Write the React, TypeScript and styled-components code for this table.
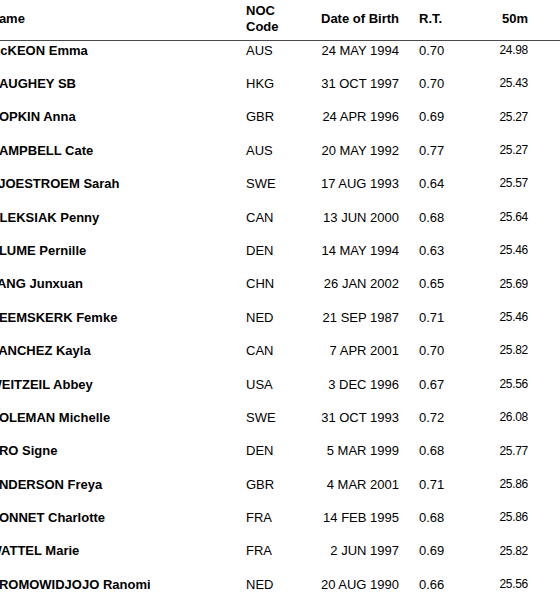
import styled, { createGlobalStyle } from 'styled-components';

const GlobalStyle = createGlobalStyle`
  html, body {
    margin: 0;
    padding: 0;
    background: #ffffff;
    overflow: hidden;
  }
  body {
    font-family: "Liberation Sans", Arial, sans-serif;
    color: #000000;
  }
`;

const Page = styled.div`
  width: 560px;
  height: 600px;
  overflow: hidden;
`;

// the sheet is cut off on the left, so the name column starts off screen
const Table = styled.div`
  margin-left: -10.5px;
  width: 570.5px;
`;

const columns = '256.5px 64px 89px 71px 58px';

const HeaderRow = styled.div`
  display: grid;
  grid-template-columns: ${columns};
  align-items: center;
  box-sizing: border-box;
  height: 41px;
  padding: 3px 0 5px;
  border-bottom: 1px solid #4a4a4a;
  font-size: 13px;
  line-height: 16px;
  font-weight: bold;
`;

const Row = styled.div`
  display: grid;
  grid-template-columns: ${columns};
  align-items: start;
  box-sizing: border-box;
  height: 33.4px;
  padding-top: 1.6px;
  font-size: 13px;
  line-height: 16px;
`;

const Cell = styled.div<{ $align?: 'left' | 'right'; $indent?: number }>`
  text-align: ${({ $align }) => $align ?? 'left'};
  padding-left: ${({ $indent }) => $indent ?? 0}px;
  white-space: nowrap;
`;

const NameCell = styled(Cell)`
  font-weight: bold;
`;

const SplitCell = styled(Cell)`
  font-size: 12px;
  letter-spacing: -0.3px;
  margin-top: -0.7px;
`;

interface Swimmer {
  name: string;
  noc: string;
  dob: string;
  rt: string;
  split: string;
}

const swimmers: Swimmer[] = [
  { name: 'McKEON Emma', noc: 'AUS', dob: '24 MAY 1994', rt: '0.70', split: '24.98' },
  { name: 'HAUGHEY SB', noc: 'HKG', dob: '31 OCT 1997', rt: '0.70', split: '25.43' },
  { name: 'HOPKIN Anna', noc: 'GBR', dob: '24 APR 1996', rt: '0.69', split: '25.27' },
  { name: 'CAMPBELL Cate', noc: 'AUS', dob: '20 MAY 1992', rt: '0.77', split: '25.27' },
  { name: 'SJOESTROEM Sarah', noc: 'SWE', dob: '17 AUG 1993', rt: '0.64', split: '25.57' },
  { name: 'OLEKSIAK Penny', noc: 'CAN', dob: '13 JUN 2000', rt: '0.68', split: '25.64' },
  { name: 'BLUME Pernille', noc: 'DEN', dob: '14 MAY 1994', rt: '0.63', split: '25.46' },
  { name: 'YANG Junxuan', noc: 'CHN', dob: '26 JAN 2002', rt: '0.65', split: '25.69' },
  { name: 'HEEMSKERK Femke', noc: 'NED', dob: '21 SEP 1987', rt: '0.71', split: '25.46' },
  { name: 'SANCHEZ Kayla', noc: 'CAN', dob: '7 APR 2001', rt: '0.70', split: '25.82' },
  { name: 'WEITZEIL Abbey', noc: 'USA', dob: '3 DEC 1996', rt: '0.67', split: '25.56' },
  { name: 'COLEMAN Michelle', noc: 'SWE', dob: '31 OCT 1993', rt: '0.72', split: '26.08' },
  { name: 'BRO Signe', noc: 'DEN', dob: '5 MAR 1999', rt: '0.68', split: '25.77' },
  { name: 'ANDERSON Freya', noc: 'GBR', dob: '4 MAR 2001', rt: '0.71', split: '25.86' },
  { name: 'BONNET Charlotte', noc: 'FRA', dob: '14 FEB 1995', rt: '0.68', split: '25.86' },
  { name: 'WATTEL Marie', noc: 'FRA', dob: '2 JUN 1997', rt: '0.69', split: '25.82' },
  { name: 'KROMOWIDJOJO Ranomi', noc: 'NED', dob: '20 AUG 1990', rt: '0.66', split: '25.56' },
];

export default function App() {
  return (
    <Page>
      <GlobalStyle />
      <Table>
        <HeaderRow>
          <Cell>Name</Cell>
          <Cell>
            NOC
            <br />
            Code
          </Cell>
          <Cell $align="right">Date of Birth</Cell>
          <Cell $indent={20}>R.T.</Cell>
          <Cell $align="right">50m</Cell>
        </HeaderRow>
        {swimmers.map(s => (
          <Row key={s.name}>
            <NameCell>{s.name}</NameCell>
            <Cell>{s.noc}</Cell>
            <Cell $align="right">{s.dob}</Cell>
            <Cell $indent={20}>{s.rt}</Cell>
            <SplitCell $align="right">{s.split}</SplitCell>
          </Row>
        ))}
      </Table>
    </Page>
  );
}
